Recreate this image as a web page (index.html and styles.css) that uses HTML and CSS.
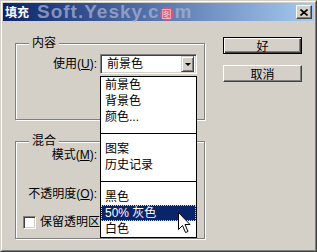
FILE: index.html
```html
<!DOCTYPE html>
<html>
<head>
<meta charset="utf-8">
<title>填充</title>
<link rel="stylesheet" href="styles.css">
</head>
<body>
<div class="window">
  <div class="frame">
    <div class="titlebar">
      <span class="title">填充</span>
      <span class="watermark">Soft.Yesky.c<span class="logo">图</span>m</span>
      <span class="close"><svg width="8" height="7" viewBox="0 0 8 7"><path d="M0.5 0.5 L7.5 6.5 M7.5 0.5 L0.5 6.5" stroke="#000" stroke-width="1.6" fill="none"/></svg></span>
    </div>
    <div class="content">
      <div class="left">
        <div class="group g1">
          <span class="legend">内容</span>
          <div class="row">
            <span class="label">使用(<u>U</u>):</span>
            <div class="combo"><span class="combo-text">前景色</span><span class="drop"><span class="tri"></span></span></div>
          </div>
        </div>
        <div class="group g2">
          <span class="legend">混合</span>
          <div class="row">
            <span class="label">模式(<u>M</u>):</span>
            <div class="combo"><span class="drop"><span class="tri"></span></span></div>
          </div>
          <div class="row row-op">
            <span class="label">不透明度(<u>O</u>):</span>
            <div class="op"><span class="field"></span></div>
          </div>
          <div class="check-row">
            <span class="checkbox"></span>
            <span class="check-label">保留透明区</span>
          </div>
        </div>
      </div>
      <div class="buttons">
        <span class="btn default">好</span>
        <span class="btn">取消</span>
      </div>
    </div>
  </div>
  <ul class="menu">
    <li>前景色</li>
    <li>背景色</li>
    <li>颜色...</li>
    <li class="sep"></li>
    <li>图案</li>
    <li>历史记录</li>
    <li class="sep"></li>
    <li>黑色</li>
    <li class="sel">50% 灰色</li>
    <li>白色</li>
  </ul>
  <svg class="cursor" width="13" height="22" viewBox="0 0 13 22"><path d="M0.5 0.5 L0.5 17.5 L4.5 13.5 L7.5 20.5 L10 19.5 L7 12.5 L12 12.5 Z" fill="#fff" stroke="#000" stroke-width="1" stroke-linejoin="miter"/></svg>
</div>
</body>
</html>
```
FILE: styles.css
```css
* { box-sizing: border-box; }
html, body { margin: 0; padding: 0; }
body {
  width: 317px;
  height: 252px;
  overflow: hidden;
  background: #D4D0C8;
  font-family: "Liberation Sans", "Noto Sans CJK SC", sans-serif;
  font-size: 12px;
  color: #000;
}
.window {
  position: relative;
  width: 317px;
  height: 252px;
  border: 1px solid;
  border-color: #D4D0C8 #404040 #404040 #D4D0C8;
  background: #D4D0C8;
}
.frame {
  height: 100%;
  border: 1px solid;
  border-color: #fff #808080 #808080 #fff;
  padding: 1px;
  display: flex;
  flex-direction: column;
}
.titlebar {
  height: 18px;
  flex: none;
  display: flex;
  align-items: center;
  padding: 0 2px 0 2px;
  background: linear-gradient(to right, #0A246A, #A6CAF0);
}
.title {
  color: #fff;
  font-weight: bold;
  font-family: "Noto Sans CJK SC", sans-serif;
  font-size: 12px;
  line-height: 18px;
}
.watermark {
  margin-left: 8px;
  display: flex;
  align-items: center;
  font-family: "Liberation Sans", sans-serif;
  font-weight: bold;
  font-size: 19px;
  letter-spacing: 1px;
  line-height: 18px;
  color: rgba(170, 180, 212, 0.72);
}
.logo {
  display: inline-block;
  width: 14px;
  height: 14px;
  margin: 3px 1px 0 0;
  border-radius: 50%;
  background: rgba(228, 84, 118, 0.85);
  color: rgba(255, 255, 255, 0.7);
  font: 10px/14px "Noto Sans CJK SC", sans-serif;
  letter-spacing: 0;
  text-align: center;
}
.close {
  margin-left: auto;
  width: 16px;
  height: 14px;
  display: flex;
  align-items: center;
  justify-content: center;
  background: #D4D0C8;
  border: 1px solid;
  border-color: #fff #404040 #404040 #fff;
  box-shadow: inset -1px -1px #808080;
}
.content {
  flex: 1;
  display: flex;
  gap: 18px;
  padding: 16px 12px 0 12px;
}
.left { width: 190px; flex: none; padding-top: 6px; }
.group {
  position: relative;
  border: 1px solid #808080;
  box-shadow: inset 1px 1px #fff, 1px 1px #fff;
}
.g1 { height: 77px; padding-top: 10px; }
.g2 { height: 98px; margin-top: 21px; padding-top: 3px; }
.legend {
  position: absolute;
  top: -10px;
  left: 13px;
  padding: 0 3px;
  background: #D4D0C8;
  line-height: 16px;
  font-family: "Noto Sans CJK SC", sans-serif;
}
.row {
  display: grid;
  grid-template-columns: 81px 97px;
  column-gap: 3px;
  align-items: center;
  height: 20px;
}
.row-op { margin-top: 19px; }
.label { text-align: right; white-space: nowrap; line-height: 20px; }
.combo {
  height: 20px;
  display: flex;
  align-items: center;
  background: #fff;
  border: 1px solid;
  border-color: #808080 #fff #fff #808080;
  box-shadow: inset 1px 1px #404040, inset -1px -1px #D4D0C8;
  padding: 2px;
}
.combo-text { padding-left: 4px; line-height: 16px; }
.drop {
  margin-left: auto;
  width: 13px;
  height: 16px;
  display: flex;
  align-items: center;
  justify-content: center;
  background: #D4D0C8;
  border: 1px solid;
  border-color: #D4D0C8 #404040 #404040 #D4D0C8;
  box-shadow: inset 1px 1px #fff, inset -1px -1px #808080;
}
.tri {
  width: 0;
  height: 0;
  border-left: 3px solid transparent;
  border-right: 3px solid transparent;
  border-top: 3px solid #000;
}
.op { display: flex; align-items: center; }
.field {
  width: 40px;
  height: 20px;
  background: #fff;
  border: 1px solid;
  border-color: #808080 #fff #fff #808080;
}
.check-row {
  display: flex;
  align-items: center;
  gap: 4px;
  height: 16px;
  margin-top: 10px;
  padding-left: 7px;
  white-space: nowrap;
  line-height: 16px;
}
.checkbox {
  width: 13px;
  height: 13px;
  flex: none;
  background: #fff;
  border: 1px solid;
  border-color: #808080 #fff #fff #808080;
  box-shadow: inset 1px 1px #404040, inset -1px -1px #D4D0C8;
}
.buttons {
  width: 79px;
  flex: none;
  display: flex;
  flex-direction: column;
  gap: 11px;
}
.btn {
  height: 17px;
  display: flex;
  align-items: center;
  justify-content: center;
  background: #D4D0C8;
  border: 1px solid;
  border-color: #fff #404040 #404040 #fff;
  box-shadow: inset -1px -1px #808080;
  font-family: "Noto Sans CJK SC", sans-serif;
  line-height: 14px;
}
.btn.default {
  border-color: #000;
  box-shadow: inset 1px 1px #fff, inset -1px -1px #404040, inset -2px -2px #808080;
}
.menu {
  position: absolute;
  left: 99px;
  top: 75px;
  width: 97px;
  height: 162px;
  margin: 0;
  padding: 0;
  list-style: none;
  background: #fff;
  border: 1px solid #000;
}
.menu li {
  height: 16px;
  line-height: 16px;
  padding-left: 4px;
  white-space: nowrap;
}
.menu li.sep {
  background: linear-gradient(#000, #000) center / 100% 1px no-repeat;
}
.menu li.sel {
  background: #0A246A;
  color: #fff;
  border: 1px dotted rgba(255, 255, 255, 0.8);
  padding-left: 3px;
  line-height: 14px;
}
.cursor {
  position: absolute;
  left: 177px;
  top: 211px;
}
```
